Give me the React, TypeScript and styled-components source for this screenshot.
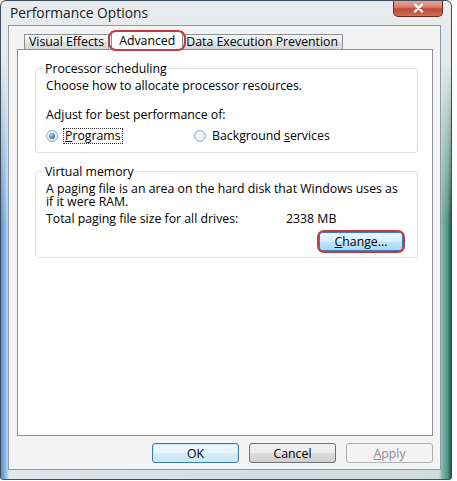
import React from "react";
import styled, { createGlobalStyle, css } from "styled-components";

const GlobalStyle = createGlobalStyle`
  html, body { margin: 0; padding: 0; background: #ffffff; }
  body { font-family: "Open Sans", "Noto Sans", "DejaVu Sans", sans-serif; font-size: 12.3px; color: #000; }
  * { box-sizing: border-box; }
`;

const Window = styled.div`
  width: 452px;
  height: 480px;
  display: flex;
  flex-direction: column;
  border: 1px solid #3d4f5c;
  border-radius: 6px 6px 3px 3px;
  background:
    linear-gradient(to bottom, #e8ecee 0, #e6eaed 60px, rgba(230, 234, 237, 0) 220px),
    linear-gradient(to right, #5a8fcb 0, #9dc0e6 5px, #dfe6ec 8px, #d3dde4 60%, #cfdcdc calc(100% - 12px), #7fb7a9 calc(100% - 9px), #4e9383 calc(100% - 3px), #2c4b47 100%);
  overflow: hidden;
`;

const TitleBar = styled.div`
  height: 24px;
  display: flex;
  justify-content: space-between;
  align-items: flex-start;
  padding: 0 8px 0 9px;
`;

const Title = styled.span`
  font-size: 13.8px;
  line-height: 23px;
  color: #1a1a1a;
`;

const CloseButton = styled.div`
  width: 50px;
  height: 17px;
  margin-top: -1px;
  border: 1px solid #6b2a20;
  border-top: none;
  border-radius: 0 0 5px 5px;
  background: linear-gradient(to bottom, #e9aa9e 0, #d77c6a 45%, #c04a35 55%, #cf6f58 100%);
  display: flex;
  align-items: center;
  justify-content: center;
`;

const FrameBody = styled.div`
  flex: 1;
  display: flex;
  flex-direction: column;
  padding: 0 10px 9px 7px;
`;

const Client = styled.div`
  flex: 1;
  display: flex;
  flex-direction: column;
  background: #f4f4f4;
  border: 1px solid #8a9aa6;
  padding: 5px 7px 6px 8px;
`;

const TabStrip = styled.div`
  display: flex;
  align-items: flex-end;
  padding-left: 8px;
  height: 18px;
  position: relative;
  z-index: 1;
`;

const Tab = styled.div<{ $selected?: boolean; $marked?: boolean }>`
  position: relative;
  height: 15px;
  padding: 0 4px;
  line-height: 14px;
  border: 1px solid #8d9096;
  border-bottom: none;
  margin-left: -1px;
  background: linear-gradient(to bottom, #f6f6f6 0, #ececec 50%, #e0e0e0 51%, #d6d6d6 100%);
  white-space: nowrap;
  ${(p) =>
    p.$selected &&
    css`
      height: 19px;
      margin: 0 -1px -1px 2px;
      padding: 0 7px;
      line-height: 17px;
      background: #ffffff;
      z-index: 2;
    `}
  ${(p) =>
    p.$marked &&
    css`
      &::after {
        content: "";
        position: absolute;
        inset: -2px -4px -1px -4px;
        border: 2px solid #c23a45;
        border-radius: 8px;
      }
    `}
`;

const Panel = styled.div`
  height: 387px;
  background: #ffffff;
  border: 1px solid #8d9096;
  padding: 12px 14px 0 17px;
  display: flex;
  flex-direction: column;
  gap: 12px;
`;

const Group = styled.fieldset<{ $bottom: number }>`
  margin: 0;
  border: 1px solid #d6dfe5;
  border-radius: 3px;
  padding: 0 14px ${(p) => p.$bottom}px 10px;
  display: flex;
  flex-direction: column;
`;

const Legend = styled.legend`
  padding: 0 1px;
  margin-left: -2px;
  line-height: 13px;
`;

const Line = styled.div<{ $top?: number }>`
  line-height: 13px;
  margin-top: ${(p) => p.$top ?? 0}px;
  white-space: nowrap;
`;

const RadioRow = styled.div`
  display: grid;
  grid-template-columns: 148px auto;
  margin-top: 6px;
  height: 15px;
  align-items: center;
`;

const RadioOption = styled.label`
  display: flex;
  align-items: center;
  gap: 6px;
`;

const RadioDot = styled.span<{ $checked?: boolean }>`
  width: 12px;
  height: 12px;
  border-radius: 50%;
  border: 1px solid #a2a9b0;
  background: radial-gradient(circle at 40% 35%, #ffffff 0, #e4e8eb 70%, #cfd5da 100%);
  display: inline-flex;
  align-items: center;
  justify-content: center;
  flex: none;
  &::after {
    content: "";
    width: 6px;
    height: 6px;
    border-radius: 50%;
    background: radial-gradient(circle at 40% 35%, #a8dcf6 0, #3b86bf 55%, #1b4f78 100%);
    display: ${(p) => (p.$checked ? "block" : "none")};
  }
`;

const FocusText = styled.span`
  outline: 1px dotted #333;
  outline-offset: 0px;
  padding: 0 1px;
  line-height: 14px;
`;

const Key = styled.span`
  text-decoration: underline;
`;

const InfoGrid = styled.div`
  display: grid;
  grid-template-columns: 240px auto;
  line-height: 13px;
  margin-top: 4px;
`;

const RightRow = styled.div`
  display: flex;
  justify-content: flex-end;
  margin-top: 7px;
`;

const Button = styled.div<{ $variant?: "default" | "normal" | "disabled" | "hot"; $marked?: boolean }>`
  position: relative;
  width: 87px;
  height: 20px;
  border-radius: 3px;
  display: flex;
  align-items: center;
  justify-content: center;
  border: 1px solid #707070;
  background: linear-gradient(to bottom, #f3f3f3 0, #ebebeb 50%, #dddddd 51%, #cfcfcf 100%);
  color: #000;
  ${(p) =>
    p.$variant === "default" &&
    css`
      border-color: #3c7fb1;
      box-shadow: inset 0 0 0 1px #bfe3f7;
      background: linear-gradient(to bottom, #f2f9fd 0, #e7f4fc 50%, #d7edfa 51%, #cde8f8 100%);
    `}
  ${(p) =>
    p.$variant === "hot" &&
    css`
      width: 84px;
      height: 19px;
      border-color: #3c7fb1;
      background: linear-gradient(to bottom, #eaf6fd 0, #d9f0fc 50%, #bee6fd 51%, #a7d9f5 100%);
    `}
  ${(p) =>
    p.$variant === "disabled" &&
    css`
      border-color: #adb2b5;
      background: #f4f4f4;
      color: #8d8d8d;
    `}
  ${(p) =>
    p.$marked &&
    css`
      &::after {
        content: "";
        position: absolute;
        inset: -3px -3px -3px -3px;
        border: 2px solid #c23a45;
        border-radius: 7px;
      }
    `}
`;

const ButtonRow = styled.div`
  display: flex;
  justify-content: flex-end;
  gap: 10px;
  margin-top: 7px;
`;

export default function App() {
  return (
    <>
      <GlobalStyle />
      <Window>
        <TitleBar>
          <Title>Performance Options</Title>
          <CloseButton>
            <svg width="11" height="10" viewBox="0 0 11 10">
              <path d="M2 1.5 L9 8.5 M9 1.5 L2 8.5" stroke="#ffffff" strokeWidth="2.4" strokeLinecap="round" />
            </svg>
          </CloseButton>
        </TitleBar>
        <FrameBody>
          <Client>
            <TabStrip>
              <Tab>Visual Effects</Tab>
              <Tab $selected $marked>
                Advanced
              </Tab>
              <Tab>Data Execution Prevention</Tab>
            </TabStrip>
            <Panel>
              <Group $bottom={10}>
                <Legend>Processor scheduling</Legend>
                <Line $top={4}>Choose how to allocate processor resources.</Line>
                <Line $top={16}>Adjust for best performance of:</Line>
                <RadioRow>
                  <RadioOption>
                    <RadioDot $checked />
                    <FocusText>
                      <Key>P</Key>rograms
                    </FocusText>
                  </RadioOption>
                  <RadioOption>
                    <RadioDot />
                    <span>
                      Background <Key>s</Key>ervices
                    </span>
                  </RadioOption>
                </RadioRow>
              </Group>
              <Group $bottom={6}>
                <Legend>Virtual memory</Legend>
                <Line $top={4}>A paging file is an area on the hard disk that Windows uses as</Line>
                <Line>if it were RAM.</Line>
                <InfoGrid>
                  <span>Total paging file size for all drives:</span>
                  <span>2338 MB</span>
                </InfoGrid>
                <RightRow>
                  <Button $variant="hot" $marked>
                    <span>
                      <Key>C</Key>hange...
                    </span>
                  </Button>
                </RightRow>
              </Group>
            </Panel>
            <ButtonRow>
              <Button $variant="default">OK</Button>
              <Button>Cancel</Button>
              <Button $variant="disabled">
                <span>
                  <Key>A</Key>pply
                </span>
              </Button>
            </ButtonRow>
          </Client>
        </FrameBody>
      </Window>
    </>
  );
}
